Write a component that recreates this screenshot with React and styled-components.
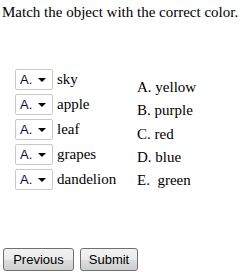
import React from "react";
import styled, { createGlobalStyle } from "styled-components";

const GlobalStyle = createGlobalStyle`
  html, body {
    margin: 0;
    padding: 0;
    background: #fff;
  }
  body {
    font-family: "Liberation Serif", "Times New Roman", serif;
    font-size: 15px;
    color: #000;
  }
`;

const Page = styled.div`
  width: 241px;
  height: 272px;
  display: flex;
  flex-direction: column;
  padding: 4px 0 0 2px;
  box-sizing: border-box;
`;

const Prompt = styled.p`
  margin: 0;
  font-size: 15px;
  line-height: 17px;
`;

const Matching = styled.div`
  display: flex;
  margin-top: 48px;
  margin-left: 13px;
`;

const Items = styled.div`
  display: flex;
  flex-direction: column;
  gap: 4px;
  width: 122px;
`;

const ItemRow = styled.div`
  display: flex;
  align-items: center;
  gap: 4px;
  height: 21px;
`;

const Picker = styled.div`
  position: relative;
  width: 38px;
  height: 21px;
  box-sizing: border-box;
  border: 1px solid #c9c9c9;
  border-radius: 2px;
  background: #fff;
  font-family: "Liberation Sans", Arial, sans-serif;
  font-size: 13px;
  line-height: 19px;
  padding-left: 4px;
  color: #0a0a3a;
`;

const Arrow = styled.span`
  position: absolute;
  right: 6px;
  top: 8px;
  width: 0;
  height: 0;
  border-left: 4px solid transparent;
  border-right: 4px solid transparent;
  border-top: 4px solid #000;
`;

const ItemLabel = styled.span`
  font-size: 15px;
`;

const Choices = styled.ol`
  list-style: none;
  margin: 10px 0 0;
  padding: 0;
  display: flex;
  flex-direction: column;
  gap: 6px;
`;

const Choice = styled.li`
  font-size: 15px;
  line-height: 17.3px;
  white-space: pre;
`;

const Footer = styled.div`
  margin-top: auto;
  display: flex;
  gap: 6px;
  padding: 0 0 1px 1px;
`;

const Button = styled.button`
  width: ${(p) => p.$w}px;
  height: 23px;
  padding: 0;
  border: 1px solid #707070;
  border-radius: 3px;
  background: linear-gradient(#f2f2f2 0%, #ebebeb 50%, #dddddd 51%, #cfcfcf 100%);
  font-family: "Liberation Sans", Arial, sans-serif;
  font-size: 13px;
  color: #000;
`;

const items = ["sky", "apple", "leaf", "grapes", "dandelion"];
const colors = ["A. yellow", "B. purple", "C. red", "D. blue", "E.  green"];

export default function App() {
  return (
    <>
      <GlobalStyle />
      <Page>
        <Prompt>Match the object with the correct color.</Prompt>
        <Matching>
          <Items>
            {items.map((it) => (
              <ItemRow key={it}>
                <Picker>
                  A.
                  <Arrow />
                </Picker>
                <ItemLabel>{it}</ItemLabel>
              </ItemRow>
            ))}
          </Items>
          <Choices>
            {colors.map((c) => (
              <Choice key={c}>{c}</Choice>
            ))}
          </Choices>
        </Matching>
        <Footer>
          <Button $w={71}>Previous</Button>
          <Button $w={58}>Submit</Button>
        </Footer>
      </Page>
    </>
  );
}
